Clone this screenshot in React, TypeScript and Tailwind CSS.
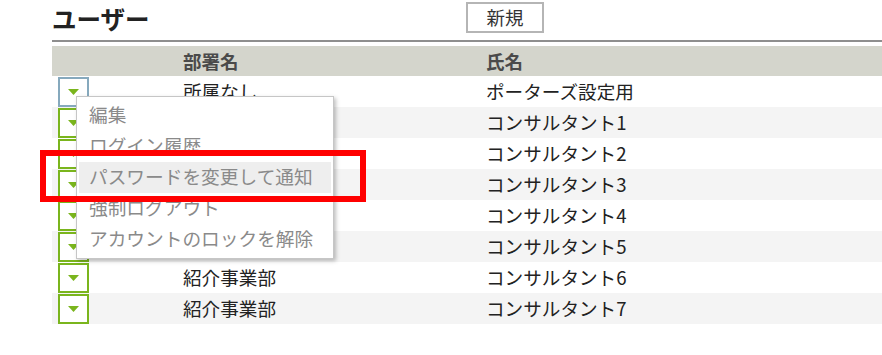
import React from "react";

const rows = [
  { dept: "所属なし", name: "ポーターズ設定用" },
  { dept: "紹介事業部", name: "コンサルタント1" },
  { dept: "紹介事業部", name: "コンサルタント2" },
  { dept: "紹介事業部", name: "コンサルタント3" },
  { dept: "紹介事業部", name: "コンサルタント4" },
  { dept: "紹介事業部", name: "コンサルタント5" },
  { dept: "紹介事業部", name: "コンサルタント6" },
  { dept: "紹介事業部", name: "コンサルタント7" },
];

const menuItems = ["編集", "ログイン履歴", "パスワードを変更して通知", "強制ログアウト", "アカウントのロックを解除"];

function Caret() {
  return (
    <svg width="11" height="6" viewBox="0 0 11 6" className="block">
      <polygon points="0,0 11,0 5.5,6" fill="#7ab51d" />
    </svg>
  );
}

function RowButton({ focused }: { focused?: boolean }) {
  return (
    <button
      className={`flex h-[30px] w-[31px] items-center justify-center border-2 bg-white ${
        focused ? "border-[#86a9bd]" : "border-[#7ab51d]"
      }`}
    >
      <Caret />
    </button>
  );
}

export default function App() {
  return (
    <div
      className="relative h-[355px] w-[882px] overflow-hidden bg-white text-[#222]"
      style={{ fontFamily: '"Noto Sans CJK JP", "Noto Sans", sans-serif' }}
    >
      <div className="ml-[52px] flex h-[42px] items-center border-b-2 border-[#8e8e8e]">
        <h1 className="w-[414px] pb-[2px] text-[24.5px] font-bold leading-none">ユーザー</h1>
        <button className="mb-[5px] h-[31px] w-[78px] border-2 border-[#b5b5b5] bg-white text-[18.5px] leading-none text-[#333]">
          新規
        </button>
      </div>

      <div className="ml-[52px] mt-[4px]">
        <div className="grid h-[30px] grid-cols-[131px_303px_1fr] items-center bg-[#d4d5cc] text-[18.5px] font-bold leading-none text-[#4a4a4a]">
          <span />
          <span>部署名</span>
          <span>氏名</span>
        </div>
        {rows.map((r, i) => (
          <div
            key={r.name}
            className={`grid h-[31px] grid-cols-[131px_303px_1fr] items-center text-[18.6px] leading-none ${
              i % 2 === 1 ? "bg-[#f4f4f4]" : "bg-white"
            }`}
          >
            <div className="pl-[6px]">
              <RowButton focused={i === 0} />
            </div>
            <span>{r.dept}</span>
            <span>{r.name}</span>
          </div>
        ))}
      </div>

      {/* dropdown menu for the first row */}
      <div className="absolute left-[76px] top-[96px] w-[258px] border border-[#c6c6c6] bg-white py-[3px] shadow-[2px_2px_4px_rgba(0,0,0,0.25)]">
        {menuItems.map((m, i) => (
          <div
            key={m}
            className={`mx-[2px] flex h-[31px] items-center pl-[10px] pb-[2px] text-[18.7px] leading-none text-[#8a8a8a] ${
              i === 2 ? "bg-[#eeeeee]" : ""
            }`}
          >
            {m}
          </div>
        ))}
      </div>

      {/* highlight box */}
      <div className="pointer-events-none absolute left-[40px] top-[150px] h-[52px] w-[326px] border-[6px] border-[#ff0000]" />
    </div>
  );
}
